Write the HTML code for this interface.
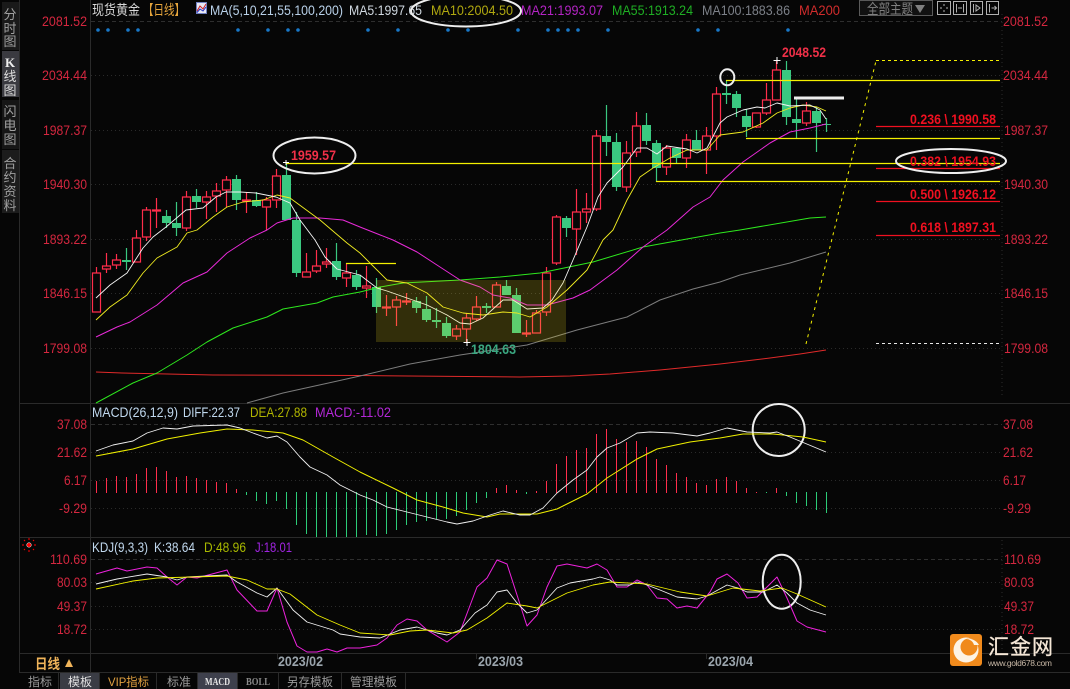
<!DOCTYPE html>
<html><head><meta charset="utf-8"><style>
html,body{margin:0;padding:0;background:#060606;overflow:hidden}
svg{display:block}
text{font-family:"Liberation Sans","Noto Sans CJK SC",sans-serif;font-size:14px}
.l text{fill:#d4273f}
.s text{fill:#a0a0a0;text-anchor:middle;font-size:13px}
.b text{font-family:"Liberation Sans","Noto Sans CJK SC",sans-serif;font-weight:700;font-size:14px}
.f text{fill:#f01020;font-weight:700;font-size:14px}
polyline{fill:none;stroke-linejoin:round}
</style></head><body>
<svg width="1070" height="689" viewBox="0 0 1070 689" xmlns="http://www.w3.org/2000/svg">
<rect width="1070" height="689" fill="#060606"/>
<!-- sidebar -->
<rect x="2" y="2" width="17" height="48" fill="#1a1a1a"/>
<rect x="2" y="51" width="17" height="46" fill="#3a3a40"/>
<rect x="2" y="100" width="17" height="49" fill="#161616"/>
<rect x="2" y="150" width="17" height="63" fill="#1c1c1c"/>
<g class="s">
<text x="10" y="19">分</text><text x="10" y="33">时</text><text x="10" y="46">图</text>
<text x="10" y="67" style="fill:#eee;font-family:'Liberation Serif';font-weight:700;font-size:13px">K</text><text x="10" y="81" style="fill:#ddd">线</text><text x="10" y="95" style="fill:#ddd">图</text>
<text x="10" y="116">闪</text><text x="10" y="130">电</text><text x="10" y="144">图</text>
<text x="10" y="168">合</text><text x="10" y="182">约</text><text x="10" y="196">资</text><text x="10" y="210">料</text>
</g>
<!-- frame -->
<path d="M19.5 0V672M90.5 0V672M19 403.5H1070M19 537.5H1070M19 653.5H1070M19 672.5H1070M405.5 672V689M277.5 653V659M476.5 653V659M706.5 653V659" stroke="#2a2a2a" fill="none"/>
<path d="M1002 14V395M1002 540V650" stroke="#2c2c2c" stroke-dasharray="1 3" fill="none"/>
<!-- grids -->
<path d="M91 21.5H1002M91 424.5H1002M91 559.5H1002" stroke="#2e2e2e" stroke-dasharray="4 3" fill="none"/>
<path d="M91 75.5H1002M91 130.5H1002M91 184.5H1002M91 239.5H1002M91 293.5H1002M91 348.5H1002M91 452.5H1002M91 480.5H1002M91 508.5H1002M91 582.5H1002M91 606.5H1002M91 629.5H1002" stroke="#2a2a2a" stroke-dasharray="1 3" fill="none"/>
<!-- left labels -->
<g class="l" text-anchor="start" lengthAdjust="spacingAndGlyphs">
<text x="42" y="26" textLength="45" lengthAdjust="spacingAndGlyphs">2081.52</text>
<text x="42" y="80" textLength="45" lengthAdjust="spacingAndGlyphs">2034.44</text>
<text x="43" y="135" textLength="44" lengthAdjust="spacingAndGlyphs">1987.37</text>
<text x="43" y="189" textLength="44" lengthAdjust="spacingAndGlyphs">1940.30</text>
<text x="43" y="244" textLength="44" lengthAdjust="spacingAndGlyphs">1893.22</text>
<text x="43" y="298" textLength="44" lengthAdjust="spacingAndGlyphs">1846.15</text>
<text x="43" y="353" textLength="44" lengthAdjust="spacingAndGlyphs">1799.08</text>
<text x="57" y="429" textLength="30" lengthAdjust="spacingAndGlyphs">37.08</text>
<text x="57" y="457" textLength="30" lengthAdjust="spacingAndGlyphs">21.62</text>
<text x="64" y="485" textLength="23" lengthAdjust="spacingAndGlyphs">6.17</text>
<text x="59" y="513" textLength="28" lengthAdjust="spacingAndGlyphs">-9.29</text>
<text x="50" y="564" textLength="37" lengthAdjust="spacingAndGlyphs">110.69</text>
<text x="57" y="587" textLength="30" lengthAdjust="spacingAndGlyphs">80.03</text>
<text x="57" y="611" textLength="30" lengthAdjust="spacingAndGlyphs">49.37</text>
<text x="57" y="634" textLength="30" lengthAdjust="spacingAndGlyphs">18.72</text>
<!-- right labels -->
<text x="1003" y="26" textLength="45" lengthAdjust="spacingAndGlyphs">2081.52</text>
<text x="1003" y="80" textLength="45" lengthAdjust="spacingAndGlyphs">2034.44</text>
<text x="1004" y="135" textLength="44" lengthAdjust="spacingAndGlyphs">1987.37</text>
<text x="1004" y="189" textLength="44" lengthAdjust="spacingAndGlyphs">1940.30</text>
<text x="1004" y="244" textLength="44" lengthAdjust="spacingAndGlyphs">1893.22</text>
<text x="1004" y="298" textLength="44" lengthAdjust="spacingAndGlyphs">1846.15</text>
<text x="1004" y="353" textLength="44" lengthAdjust="spacingAndGlyphs">1799.08</text>
<text x="1003" y="429" textLength="30" lengthAdjust="spacingAndGlyphs">37.08</text>
<text x="1003" y="457" textLength="30" lengthAdjust="spacingAndGlyphs">21.62</text>
<text x="1003" y="485" textLength="23" lengthAdjust="spacingAndGlyphs">6.17</text>
<text x="1003" y="513" textLength="28" lengthAdjust="spacingAndGlyphs">-9.29</text>
<text x="1004" y="564" textLength="37" lengthAdjust="spacingAndGlyphs">110.69</text>
<text x="1004" y="587" textLength="30" lengthAdjust="spacingAndGlyphs">80.03</text>
<text x="1004" y="611" textLength="30" lengthAdjust="spacingAndGlyphs">49.37</text>
<text x="1004" y="634" textLength="30" lengthAdjust="spacingAndGlyphs">18.72</text>
</g>
<!-- header -->
<text x="92" y="15" fill="#d8d8d8" textLength="48" lengthAdjust="spacingAndGlyphs">现货黄金</text>
<text x="143" y="15" fill="#e6a53c" textLength="42" lengthAdjust="spacingAndGlyphs">【日线】</text>
<g>
<rect x="196.5" y="2.5" width="10" height="11" fill="#e8e8f4" stroke="#7080c0"/>
<path d="M197 11L200 6L203 9L206 4" stroke="#d02020" fill="none"/>
<path d="M197 12.5L200 9L203 11L206 7" stroke="#2030c0" fill="none"/>
</g>
<text x="210" y="15" fill="#b8d0e8" textLength="133" lengthAdjust="spacingAndGlyphs">MA(5,10,21,55,100,200)</text>
<text x="349" y="15" fill="#d0d8e0" textLength="73" lengthAdjust="spacingAndGlyphs">MA5:1997.65</text>
<text x="431" y="15" fill="#b0a810" textLength="82" lengthAdjust="spacingAndGlyphs">MA10:2004.50</text>
<text x="521" y="15" fill="#b424c4" textLength="82" lengthAdjust="spacingAndGlyphs">MA21:1993.07</text>
<text x="612" y="15" fill="#1fae24" textLength="81" lengthAdjust="spacingAndGlyphs">MA55:1913.24</text>
<text x="702" y="15" fill="#7c8088" textLength="88" lengthAdjust="spacingAndGlyphs">MA100:1883.86</text>
<text x="799" y="15" fill="#d02c2c" textLength="41" lengthAdjust="spacingAndGlyphs">MA200</text>
<!-- toolbar -->
<rect x="859.5" y="0.5" width="73" height="15" fill="#111" stroke="#5a5a5a"/>
<text x="867" y="14" fill="#808080" textLength="46" lengthAdjust="spacingAndGlyphs">全部主题</text>
<path d="M915 5H925L920 13Z" fill="#808080"/>
<g stroke="#b0b0b0" fill="none">
<rect x="937.5" y="1.5" width="13" height="13"/><rect x="953.5" y="1.5" width="13" height="13"/><rect x="970.5" y="1.5" width="12" height="13"/><rect x="986.5" y="1.5" width="12" height="13"/>
<path d="M940 8H942M946 8H948M944 4V6M944 10V12M956.5 4V12.5M963.5 4V12.5M958 8H962M973.5 4V12.5M976 5L980 8L976 11ZM989.5 4V12.5M991.5 8H996.5M994.5 6L996.5 8L994.5 10"/>
</g>
<!-- blue dots -->
<g fill="#1878c8">
<circle cx="98" cy="30" r="1.8"/><circle cx="108" cy="30" r="1.8"/><circle cx="128" cy="30" r="1.8"/><circle cx="138" cy="30" r="1.8"/><circle cx="238" cy="30" r="1.8"/><circle cx="268" cy="30" r="1.8"/><circle cx="288" cy="30" r="1.8"/><circle cx="298" cy="30" r="1.8"/><circle cx="368" cy="30" r="1.8"/><circle cx="398" cy="30" r="1.8"/><circle cx="448" cy="30" r="1.8"/><circle cx="468" cy="30" r="1.8"/><circle cx="518" cy="30" r="1.8"/><circle cx="548" cy="30" r="1.8"/><circle cx="558" cy="30" r="1.8"/><circle cx="568" cy="30" r="1.8"/><circle cx="578" cy="30" r="1.8"/><circle cx="608" cy="30" r="1.8"/><circle cx="698" cy="30" r="1.8"/><circle cx="718" cy="30" r="1.8"/><circle cx="788" cy="30" r="1.8"/>
</g>
<!-- green wicks & bodies -->
<path stroke="#3ac880" stroke-width="1.2" fill="none" d="M126.5 248V270M166.5 210V228M176.5 202V236M196.5 189V208M236.5 175V210M256.5 192V207M286.5 162V220M296.5 212V277M336.5 243V280M356.5 270V290M376.5 278V313M416.5 297V313M426.5 296V322M436.5 308V328M446.5 317V338M486.5 303V313M506.5 280V295M516.5 288V333M566.5 216V237M606.5 105V156M616.5 133V191M646.5 113V145M656.5 140V182M676.5 148V163M696.5 130V150M726.5 80V104M736.5 91V117M746.5 109V137M786.5 61V125M796.5 99V138M816.5 107V152M826.5 118V132"/>
<path fill="#3ac880" d="M122 260h9V262h-9zM162 216h9V223h-9zM172 223h9V228h-9zM192 196h9V202h-9zM232 179h9V200h-9zM252 200h9V206h-9zM282 175h9V220h-9zM292 220h9V273h-9zM332 261h9V277h-9zM352 275h9V287h-9zM372 287h9V307h-9zM412 301h9V308h-9zM422 309h9V320h-9zM432 320h9V322h-9zM442 323h9V336h-9zM482 306h9V308h-9zM502 286h9V295h-9zM512 295h9V333h-9zM562 218h9V228h-9zM602 136h9V142h-9zM612 142h9V187h-9zM642 125h9V141h-9zM652 143h9V168h-9zM672 148h9V158h-9zM692 140h9V150h-9zM722 93h9V95h-9zM732 94h9V108h-9zM742 116h9V127h-9zM782 70h9V117h-9zM792 119h9V123h-9zM812 111h9V123h-9zM822 124h9V125h-9z"/>
<!-- red wicks & bodies -->
<path stroke="#ff2d4b" stroke-width="1.2" fill="none" d="M96.5 267V312M106.5 253V273M116.5 254V269M136.5 230V262M146.5 207V241M156.5 198V228M186.5 191V231M206.5 191V219M216.5 183V212M226.5 176V207M246.5 192V213M266.5 197V230M276.5 169V208M306.5 253V277M316.5 250V273M326.5 248V268M346.5 263V287M366.5 266V298M386.5 295V316M396.5 296V326M406.5 293V305M456.5 325V340M466.5 313V342M476.5 296V321M496.5 282V307M526.5 320V337M536.5 310V333M546.5 267V316M556.5 215V265M576.5 189V255M586.5 193V223M596.5 130V211M626.5 141V192M636.5 112V157M666.5 145V175M686.5 134V168M706.5 127V174M716.5 87V150M756.5 113V128M766.5 83V115M776.5 60V100M806.5 102V126"/>
<path stroke="#ff2d4b" stroke-width="1.2" fill="#060606" d="M92.5 273h8V312h-8zM102.5 266h8V269h-8zM112.5 260h8V265h-8zM132.5 238h8V262h-8zM142.5 210h8V237h-8zM152.5 210h8V211h-8zM182.5 197h8V228h-8zM202.5 197h8V202h-8zM212.5 191h8V196h-8zM222.5 180h8V190h-8zM242.5 200h8V201h-8zM262.5 200h8V207h-8zM272.5 176h8V200h-8zM302.5 272h8V277h-8zM312.5 266h8V271h-8zM322.5 262h8V264h-8zM342.5 273h8V278h-8zM362.5 286h8V288h-8zM382.5 307h8V308h-8zM392.5 300h8V307h-8zM402.5 301h8V302h-8zM452.5 329h8V336h-8zM462.5 318h8V329h-8zM472.5 307h8V319h-8zM492.5 285h8V307h-8zM522.5 333h8V334h-8zM532.5 313h8V333h-8zM542.5 273h8V312h-8zM552.5 217h8V263h-8zM572.5 212h8V229h-8zM582.5 209h8V212h-8zM592.5 136h8V209h-8zM622.5 153h8V187h-8zM632.5 126h8V152h-8zM662.5 148h8V167h-8zM682.5 140h8V158h-8zM702.5 136h8V150h-8zM712.5 94h8V136h-8zM752.5 113h8V127h-8zM762.5 100h8V113h-8zM772.5 70h8V100h-8zM802.5 111h8V123h-8z"/>
<!-- MA lines -->
<polyline stroke="#e02a2a" stroke-width="1" points="96,372 122,373 213,375 360,375.5 520,377 570,376 610,374 660,370 720,364 770,358 800,354 826,350"/>
<polyline stroke="#7c7c7c" stroke-width="1" points="247,403 283,393 333,382 360,376 410,364 460,355 527,345 577,330 627,317 660,300 693,289 720,282 740,275 790,263 826,252"/>
<polyline stroke="#2ee81e" stroke-width="1" points="96,403 133,383 157,373 187,355 207,342 233,328 267,317 283,309 317,303 333,297 360,292 380,287 403,283 460,280 500,277 540,273 593,262 643,247 720,233 740,230 810,218 826,217"/>
<polyline stroke="#e82ad8" stroke-width="1" points="96,337 117,327 130,322 157,305 183,283 207,272 227,253 250,238 267,230 277,223 293,218 320,218 343,220 360,227 393,240 417,252 440,267 460,280 480,287 493,295 510,298 527,305 547,305 573,298 590,290 617,270 643,247 667,230 693,207 710,197 723,180 743,162 770,143 790,132 810,128 826,124"/>
<polyline stroke="#f0ec20" stroke-width="0.9" points="96,320 110,307 127,295 143,273 157,258 177,247 187,233 197,230 213,217 227,207 243,202 263,200 277,195 290,198 320,220 347,243 360,253 370,263 387,280 407,283 427,293 443,307 463,313 483,315 503,312 517,313 530,317 547,307 567,290 587,270 603,240 613,230 627,200 640,177 653,168 670,158 687,150 707,150 720,135 743,132 763,123 777,113 790,108 803,105 817,107 826,111"/>
<polyline stroke="#f4f4f4" stroke-width="0.9" points="96,298 110,285 127,273 143,248 153,237 166,227 186,210 203,208 216,197 226,192 240,192 256,193 276,197 290,203 300,220 315,240 325,257 337,269 360,275 377,288 387,291 407,298 427,305 447,315 460,323 470,324 483,318 503,300 513,300 527,309 543,308 552,300 563,283 573,260 587,227 598,197 607,183 623,167 637,148 647,148 657,154 667,146 687,149 697,153 707,148 720,123 727,117 743,110 757,107 765,108 777,103 790,106 810,105 820,110 826,119"/>
<!-- yellow rect -->
<rect x="376" y="280" width="190" height="62" fill="#f4e020" fill-opacity=".19"/>
<!-- horizontals -->
<path stroke="#f4f000" stroke-width="1.2" fill="none" d="M286 163.5H1000M656 181.5H1000M726 80.5H1000M746 138.5H1000M346 263.5H396"/>
<path stroke="#f01020" stroke-width="1.2" fill="none" d="M876 126.5H1000M876 168.5H1000M876 201.5H1000M876 235.5H1000"/>
<path stroke="#eeeeee" stroke-width="3" d="M794 98H844"/>
<path stroke="#f4f000" stroke-width="1" fill="none" stroke-dasharray="3 4" d="M806 344L876 61"/>
<path stroke="#f4f000" stroke-width="1" fill="none" stroke-dasharray="3 3" d="M876 60.5H1000"/>
<path stroke="#e8e8e8" stroke-width="1" fill="none" stroke-dasharray="3 3" d="M876 343.5H1000"/>
<path stroke="#fff" d="M773.5 60.5H780.5M777 57V64M463.5 342.5H470.5M467 339V346M283 162.5H289M286 160V165" fill="none"/>
<!-- price labels -->
<g class="b">
<text x="291" y="160" fill="#f03048" textLength="45" lengthAdjust="spacingAndGlyphs">1959.57</text>
<text x="782" y="57" fill="#f03048" textLength="44" lengthAdjust="spacingAndGlyphs">2048.52</text>
<text x="471" y="354" fill="#3aa680" textLength="45" lengthAdjust="spacingAndGlyphs">1804.63</text>
</g>
<g class="f">
<text x="910" y="124" textLength="86" lengthAdjust="spacingAndGlyphs">0.236 \ 1990.58</text>
<text x="910" y="166" textLength="86" lengthAdjust="spacingAndGlyphs">0.382 \ 1954.93</text>
<text x="910" y="199" textLength="86" lengthAdjust="spacingAndGlyphs">0.500 \ 1926.12</text>
<text x="910" y="232" textLength="86" lengthAdjust="spacingAndGlyphs">0.618 \ 1897.31</text>
</g>
<!-- ellipses -->
<g fill="none" stroke="#eeeeee" stroke-width="2">
<ellipse cx="314.5" cy="155.5" rx="41" ry="18"/>
<ellipse cx="466" cy="11" rx="55" ry="15.5"/>
<ellipse cx="951" cy="161" rx="55" ry="12"/>
<ellipse cx="727.3" cy="77.3" rx="7" ry="8"/>
<circle cx="778.7" cy="430" r="26"/>
<ellipse cx="781.7" cy="581.7" rx="19" ry="27"/>
</g>
<!-- MACD header -->
<text x="92" y="417" fill="#c0d8ee" textLength="86" lengthAdjust="spacingAndGlyphs">MACD(26,12,9)</text>
<text x="183" y="417" fill="#c0d8ee" textLength="57" lengthAdjust="spacingAndGlyphs">DIFF:22.37</text>
<text x="250" y="417" fill="#b0b400" textLength="57" lengthAdjust="spacingAndGlyphs">DEA:27.88</text>
<text x="315" y="417" fill="#b428d8" textLength="76" lengthAdjust="spacingAndGlyphs">MACD:-11.02</text>
<!-- MACD histogram -->
<path stroke="#ff2d4b" fill="none" d="M96.5 481V493M106.5 478V493M116.5 476V493M126.5 477V493M136.5 474V493M146.5 468V493M156.5 467V493M166.5 471V493M176.5 477V493M186.5 476V493M196.5 478V493M206.5 480V493M216.5 482V493M226.5 483V493M236.5 489V493M496.5 488V493M506.5 485V493M516.5 490V493M536.5 491V493M546.5 481V493M556.5 464V493M566.5 456V493M576.5 450V493M586.5 448V493M596.5 434V493M606.5 429V493M616.5 439V493M626.5 442V493M636.5 441V493M646.5 447V493M656.5 459V493M666.5 465V493M676.5 473V493M686.5 477V493M696.5 483V493M706.5 485V493M716.5 479V493M726.5 477V493M736.5 481V493M746.5 488V493M756.5 492V493M776.5 488V493"/>
<path stroke="#2ccc78" fill="none" d="M246.5 492V495M256.5 492V501M266.5 492V504M276.5 492V501M286.5 492V509M296.5 492V525M306.5 492V534M316.5 492V537M326.5 492V537M336.5 492V537M346.5 492V537M356.5 492V537M366.5 492V535M376.5 492V536M386.5 492V534M396.5 492V530M406.5 492V525M416.5 492V522M426.5 492V521M436.5 492V519M446.5 492V519M456.5 492V516M466.5 492V510M476.5 492V503M486.5 492V498M526.5 492V494M766.5 492V493M786.5 492V496M796.5 492V503M806.5 492V506M816.5 492V510M826.5 492V513"/>
<polyline stroke="#f0f000" stroke-width="1" points="96,456 133,449 167,439 200,433 227,429 253,430 283,433 303,440 333,457 360,472 393,488 417,500 443,507 463,513 487,517 500,514 537,514 557,509 587,494 607,478 637,459 657,449 690,442 720,438 743,434 773,434 803,437 826,442"/>
<polyline stroke="#f0f0f0" stroke-width="0.9" points="96,451 113,445 133,441 147,433 163,428 177,429 193,426 227,425 240,428 253,433 267,438 277,436 287,442 300,457 310,467 327,475 340,485 360,495 373,500 387,507 407,512 427,517 447,522 457,524 473,521 490,515 503,511 520,515 530,515 543,508 557,493 573,480 587,470 597,457 607,448 620,443 637,433 650,432 673,433 697,436 710,433 727,428 747,432 770,433 777,432 790,437 826,452"/>
<!-- KDJ -->
<g transform="translate(29,545)"><circle r="2.5" fill="#fff"/><circle r="2" fill="#f00"/><path stroke="#f00" fill="none" stroke-width="1" d="M-7 0H-5M5 0H7M0 -7V-5M0 5V7M-5 -5L-4 -4M5 -5L4 -4M-5 5L-4 4M5 5L4 4"/></g>
<text x="92" y="552" fill="#c0d8ee" textLength="56" lengthAdjust="spacingAndGlyphs">KDJ(9,3,3)</text>
<text x="154" y="552" fill="#c0d8ee" textLength="41" lengthAdjust="spacingAndGlyphs">K:38.64</text>
<text x="204" y="552" fill="#a8b800" textLength="42" lengthAdjust="spacingAndGlyphs">D:48.96</text>
<text x="255" y="552" fill="#a024e0" textLength="37" lengthAdjust="spacingAndGlyphs">J:18.01</text>
<polyline stroke="#ee22dd" stroke-width="1" points="96,574 117,568 127,571 147,567 157,568 167,577 177,585 187,577 197,578 227,570 237,590 257,611 267,611 277,588 287,622 297,646 307,652 317,652 327,649 337,652 347,648 360,648 377,645 387,638 397,625 407,619 417,621 427,630 447,642 460,632 477,587 487,578 497,560 507,564 527,626 537,615 547,587 557,566 567,564 587,568 597,564 607,570 617,587 627,587 637,580 647,585 657,598 667,599 677,608 687,606 697,608 710,592 717,579 727,574 738,583 747,598 757,597 777,577 787,598 797,621 807,627 826,632"/>
<polyline stroke="#f0f0f0" stroke-width="0.9" points="96,584 117,579 147,574 167,577 177,580 187,577 227,575 237,582 257,593 267,597 277,588 293,610 307,622 333,630 340,634 360,637 380,638 400,630 417,627 437,633 447,635 460,630 475,613 487,605 497,592 507,590 517,603 527,613 537,610 557,588 570,583 593,579 600,577 610,580 617,585 630,585 637,582 647,585 660,590 677,597 697,599 707,596 727,585 738,588 747,592 763,592 777,585 787,593 797,603 810,610 826,615"/>
<polyline stroke="#f0f000" stroke-width="0.9" points="96,589 133,581 157,578 227,576 247,580 267,589 277,589 290,594 317,615 340,625 360,633 390,635 410,631 427,630 453,633 467,630 487,618 507,603 527,606 537,608 567,593 593,585 610,582 647,584 680,592 707,596 733,588 760,591 782,588 797,594 826,607"/>
<!-- bottom axis -->
<text x="35" y="669" fill="#f0b45a" font-weight="700" style="font-size:14px" textLength="25" lengthAdjust="spacingAndGlyphs">日线</text>
<path d="M65 667L69 659L73 667Z" fill="#f0b45a"/>
<text x="278" y="666" fill="#9aa4ac" font-weight="700" textLength="45" lengthAdjust="spacingAndGlyphs">2023/02</text>
<text x="478" y="666" fill="#9aa4ac" font-weight="700" textLength="45" lengthAdjust="spacingAndGlyphs">2023/03</text>
<text x="708" y="666" fill="#9aa4ac" font-weight="700" textLength="45" lengthAdjust="spacingAndGlyphs">2023/04</text>
<!-- tabs -->
<rect x="60" y="673" width="39" height="16" fill="#3a3c44"/>
<rect x="198" y="673" width="39" height="16" fill="#3e404c"/>
<path stroke="#2a2a2a" d="M58.5 672V689M99.5 672V689M156.5 672V689M197.5 672V689M237.5 672V689M278.5 672V689M341.5 672V689"/>
<text x="28" y="686" fill="#9a9a9a" style="font-size:12px">指标</text>
<text x="68" y="686" fill="#e0e0e0" style="font-size:12px">模板</text>
<text x="108" y="686" fill="#e0a040" style="font-size:12px" textLength="41" lengthAdjust="spacingAndGlyphs">VIP指标</text>
<text x="167" y="686" fill="#9a9a9a" style="font-size:12px">标准</text>
<text x="205" y="685" fill="#e8e8e8" style="font-family:'Liberation Serif';font-weight:700;font-size:11px" textLength="25" lengthAdjust="spacingAndGlyphs">MACD</text>
<text x="246" y="685" fill="#8a8a8a" style="font-family:'Liberation Serif';font-weight:700;font-size:11px" textLength="24" lengthAdjust="spacingAndGlyphs">BOLL</text>
<text x="287" y="686" fill="#9a9a9a" style="font-size:12px" textLength="46" lengthAdjust="spacingAndGlyphs">另存模板</text>
<text x="350" y="686" fill="#9a9a9a" style="font-size:12px" textLength="47" lengthAdjust="spacingAndGlyphs">管理模板</text>
<!-- logo -->
<rect x="950" y="634" width="32" height="32" rx="3" fill="#f08a1c"/>
<circle cx="966" cy="650" r="12.5" fill="#fdf3e4"/>
<circle cx="969" cy="647" r="8.5" fill="#f08a1c"/>
<path d="M966 639 A12 12 0 0 1 979 645 L974 645 A8 8 0 0 0 966 639Z" fill="#fdf3e4"/>
<text x="988" y="654" fill="#f4e6d6" style="font-size:21px" stroke="#f4e6d6" stroke-width=".3" textLength="65" lengthAdjust="spacing">汇金网</text>
<text x="988" y="666" fill="#c8b8a6" style="font-size:8.5px" textLength="64" lengthAdjust="spacing">www.gold678.com</text>
</svg>
</body></html>
